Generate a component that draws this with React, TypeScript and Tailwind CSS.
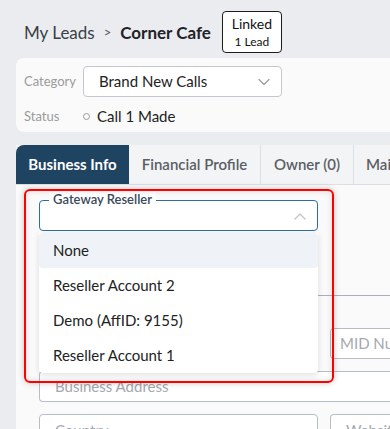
import React from 'react';

const font = { fontFamily: 'Lato, "Open Sans", Arial, sans-serif' };

function Chevron({ up = false, className = '' }: { up?: boolean; className?: string }) {
  return (
    <svg width="12" height="8" viewBox="0 0 12 8" fill="none" className={className}>
      <path d={up ? 'M1 7l5-5 5 5' : 'M1 1.5l5 5 5-5'} stroke="currentColor" strokeWidth="1.3" strokeLinecap="round" strokeLinejoin="round" />
    </svg>
  );
}

const options = ['None', 'Reseller Account 2', 'Demo (AffID: 9155)', 'Reseller Account 1'];

export default function App() {
  return (
    <div className="relative w-[390px] h-[429px] overflow-hidden bg-[#eaecef] text-[#222]" style={font}>
      {/* Header */}
      <div className="flex items-center pl-6 pt-[11px]">
        <div className="flex items-center text-[17px] leading-none">
          <span className="text-[#3a3f47]">My Leads</span>
          <span className="mx-[9px] text-[13px] text-[#555]">&gt;</span>
          <span className="font-bold text-[#1f2328]">Corner Cafe</span>
        </div>
        <div className="ml-[11px] flex h-[42px] w-[60px] shrink-0 flex-col items-center justify-center rounded-[4px] border border-[#1c1c1c] bg-white leading-none">
          <span className="text-[14px] text-[#111]">Linked</span>
          <span className="mt-[5px] text-[12px] text-[#111]">1 Lead</span>
        </div>
      </div>

      {/* Category / Status card */}
      <div className="ml-4 mt-[5px] h-[74px] rounded-l-lg bg-[#fafafa] pl-2 pt-2">
        <div className="flex items-center">
          <span className="w-[59px] shrink-0 text-[13px] text-[#9a9a9a]">Category</span>
          <div className="flex h-[31px] w-[199px] shrink-0 items-center justify-between rounded-[4px] border border-[#c4c8cc] bg-white pl-[15px] pr-[11px]">
            <span className="text-[15px] text-[#222]">Brand New Calls</span>
            <Chevron className="text-[#a0a0a0]" />
          </div>
        </div>
        <div className="mt-[8px] flex items-center">
          <span className="w-[59px] shrink-0 text-[13px] text-[#9a9a9a]">Status</span>
          <span className="h-[7px] w-[7px] shrink-0 rounded-full border border-[#999]" />
          <span className="ml-[7px] text-[15px] text-[#222]">Call 1 Made</span>
        </div>
      </div>

      {/* Tabs */}
      <div className="ml-4 mt-[13px]">
        <div className="flex h-[40px] border-b border-[#dcdfe3] bg-[#f3f4f5] text-[15px]">
          <div className="flex w-[113px] shrink-0 items-center justify-center whitespace-nowrap rounded-tl-lg bg-[#1f4461] font-bold text-white">Business Info</div>
          <div className="flex w-[132px] shrink-0 items-center justify-center whitespace-nowrap border-r border-[#dcdfe3] font-semibold text-[#5a5f66]">Financial Profile</div>
          <div className="flex w-[93px] shrink-0 items-center justify-center whitespace-nowrap border-r border-[#dcdfe3] font-semibold text-[#5a5f66]">Owner (0)</div>
          <div className="flex min-w-0 flex-1 items-center overflow-hidden whitespace-nowrap pl-[12px] font-semibold text-[#5a5f66]">Mailing Address</div>
        </div>

        {/* Form content */}
        <div className="relative h-[260px] bg-[#fafafa] pl-[23px] pt-[15px]">
          <div className="flex gap-3">
            <div className="relative w-[279px] shrink-0">
              <div className="flex h-[31px] items-center justify-end rounded-[4px] border border-[#2a6ea6] bg-white pr-[11px]">
                <Chevron up className="text-[#c0c4c8]" />
              </div>
              <span className="absolute left-[10px] top-[-8px] whitespace-nowrap bg-white px-[4px] text-[13px] font-semibold leading-[14px] text-[#3b4a5a]">Gateway Reseller</span>

              {/* Open menu */}
              <div className="absolute left-0 top-[33px] z-10 w-[279px] rounded-b-[4px] bg-white shadow-[0_2px_6px_rgba(0,0,0,0.12)]">
                {options.map((o, i) => (
                  <div key={o} className={`flex h-[35px] items-center pl-[14px] text-[15px] text-[#222] ${i === 0 ? 'rounded-[4px] bg-[#eff3f7]' : ''}`}>
                    {o}
                  </div>
                ))}
              </div>
            </div>
          </div>

          <div className="mt-[64px] border-b border-[#a9b0b8]" />

          <div className="mt-[32px] flex gap-3">
            <div className="h-[31px] w-[279px] shrink-0 rounded-[4px] border border-[#b8bec5] bg-white" />
            <div className="flex h-[31px] min-w-0 flex-1 items-center overflow-hidden whitespace-nowrap rounded-l-[4px] border border-r-0 border-[#b8bec5] bg-white pl-[9px] text-[15px] text-[#a3a9b0]">MID Number</div>
          </div>

          <div className="mt-[12px] flex h-[31px] items-center rounded-l-[4px] border border-r-0 border-[#b8bec5] bg-white pl-[15px] text-[15px] text-[#a3a9b0]">Business Address</div>

          <div className="mt-[12px] flex gap-3">
            <div className="flex h-[31px] w-[279px] shrink-0 items-start rounded-[4px] border border-[#b8bec5] bg-white pl-[15px] pt-[6px] text-[15px] leading-[18px] text-[#a3a9b0]">Country</div>
            <div className="flex h-[31px] min-w-0 flex-1 items-start overflow-hidden whitespace-nowrap rounded-l-[4px] border border-r-0 border-[#b8bec5] bg-white pl-[15px] pt-[6px] text-[15px] leading-[18px] text-[#a3a9b0]">Website</div>
          </div>
        </div>
      </div>

      {/* Annotation highlight */}
      <div className="pointer-events-none absolute left-[24px] top-[189px] z-20 h-[194px] w-[310px] rounded-[6px] border-2 border-[#ff0000] shadow-[0_0_6px_rgba(0,0,0,0.22),inset_0_0_6px_rgba(0,0,0,0.12)]" />
    </div>
  );
}
